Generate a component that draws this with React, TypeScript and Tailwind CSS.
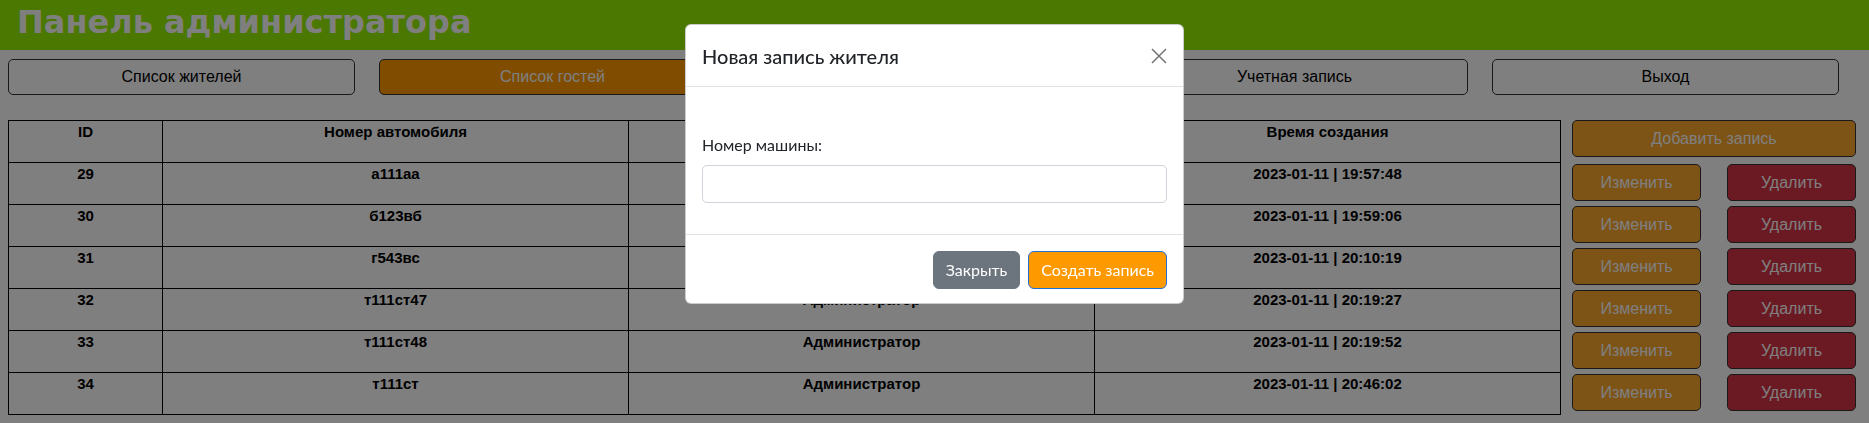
const navItems = [
  { label: "Список жителей", active: false },
  { label: "Список гостей", active: true },
  { label: "Администраторы", active: false },
  { label: "Учетная запись", active: false },
  { label: "Выход", active: false },
];

const rows = [
  { id: 29, car: "а111аа", author: "Администратор", time: "2023-01-11 | 19:57:48" },
  { id: 30, car: "б123вб", author: "Администратор", time: "2023-01-11 | 19:59:06" },
  { id: 31, car: "г543вс", author: "Администратор", time: "2023-01-11 | 20:10:19" },
  { id: 32, car: "т111ст47", author: "Администратор", time: "2023-01-11 | 20:19:27" },
  { id: 33, car: "т111ст48", author: "Администратор", time: "2023-01-11 | 20:19:52" },
  { id: 34, car: "т111ст", author: "Администратор", time: "2023-01-11 | 20:46:02" },
];

function GuestModal() {
  return (
    <div className="fixed inset-0 flex justify-center pt-[24px]">
      <div className="h-fit w-[499px] rounded-[6px] border border-black/20 bg-white font-['Lato',sans-serif] text-[#212529]">
        <div className="flex items-center justify-between border-b border-[#dee2e6] px-[16px] pt-[16px] pb-[15px]">
          <h5 className="text-[20px] font-medium leading-[30px]">Новая запись жителя</h5>
          <button className="flex h-[16px] w-[16px] items-center justify-center">
            <svg viewBox="0 0 16 16" className="h-[16px] w-[16px]">
              <path d="M1 1L15 15M15 1L1 15" stroke="#000" strokeOpacity="0.55" strokeWidth="1.5" />
            </svg>
          </button>
        </div>

        <div className="px-[16px] pt-[46px] pb-[31px]">
          <label className="mb-[8px] block text-[16px] leading-[24px]">Номер машины:</label>
          <input className="block h-[38px] w-full rounded-[5px] border border-[#ced4da] px-[12px] text-[16px] outline-none" />
        </div>

        <div className="flex justify-end gap-[8px] border-t border-[#dee2e6] px-[16px] pt-[16px] pb-[14px]">
          <button className="h-[38px] rounded-[6px] border border-[#6c757d] bg-[#6c757d] px-[12px] text-[16px] text-white">
            Закрыть
          </button>
          <button className="h-[38px] rounded-[6px] border border-[#1e6fd9] bg-[#ff9900] px-[12px] text-[16px] text-white">
            Создать запись
          </button>
        </div>
      </div>
    </div>
  );
}

export default function App() {
  return (
    <div className="min-h-screen bg-white font-['Liberation_Sans',sans-serif] text-black">
      <header className="h-[50px] bg-[#94f000] pl-[17px]">
        <h1 className="font-['DejaVu_Sans',sans-serif] text-[32px] font-semibold leading-[44px] text-white">
          Панель администратора
        </h1>
      </header>

      <nav className="mt-[9px] flex gap-[24px] pl-[8px]">
        {navItems.map((item) => (
          <button
            key={item.label}
            className={`h-[36px] w-[347px] shrink-0 rounded-[5px] border border-[#333] text-[16px] ${
              item.active ? "bg-[#ff9900] text-white" : "bg-white text-black"
            }`}
          >
            {item.label}
          </button>
        ))}
      </nav>

      <div className="mt-[25px] flex items-start gap-[11px] pl-[8px]">
        <table className="w-[1552px] table-fixed border-collapse border border-black text-[15px] font-bold">
          <colgroup>
            <col className="w-[154px]" />
            <col className="w-[466px]" />
            <col className="w-[466px]" />
            <col className="w-[466px]" />
          </colgroup>
          <thead>
            <tr className="h-[42px]">
              <th className="border border-black pt-[2px] align-top leading-[18px]">ID</th>
              <th className="border border-black pt-[2px] align-top leading-[18px]">Номер автомобиля</th>
              <th className="border border-black pt-[2px] align-top leading-[18px]">Создатель</th>
              <th className="border border-black pt-[2px] align-top leading-[18px]">Время создания</th>
            </tr>
          </thead>
          <tbody>
            {rows.map((r) => (
              <tr key={r.id} className="h-[42px]">
                <td className="border border-black pt-[2px] text-center align-top leading-[18px]">{r.id}</td>
                <td className="border border-black pt-[2px] text-center align-top leading-[18px]">{r.car}</td>
                <td className="border border-black pt-[2px] text-center align-top leading-[18px]">{r.author}</td>
                <td className="border border-black pt-[2px] text-center align-top leading-[18px]">{r.time}</td>
              </tr>
            ))}
          </tbody>
        </table>

        <div className="flex w-[284px] shrink-0 flex-col">
          <button className="h-[37px] rounded-[5px] border border-[#333] bg-[#faa62c] text-[16px] text-white">
            Добавить запись
          </button>
          <div className="mt-[7px] grid grid-cols-2 gap-x-[26px] gap-y-[5px]">
            {rows.map((r) => (
              <div key={r.id} className="contents">
                <button className="h-[37px] rounded-[5px] border border-[#333] bg-[#faa62c] text-[16px] text-white">
                  Изменить
                </button>
                <button className="h-[37px] rounded-[5px] border border-[#333] bg-[#d63446] text-[16px] text-white">
                  Удалить
                </button>
              </div>
            ))}
          </div>
        </div>
      </div>

      <div className="fixed inset-0 bg-black/50" />
      <GuestModal />
    </div>
  );
}
